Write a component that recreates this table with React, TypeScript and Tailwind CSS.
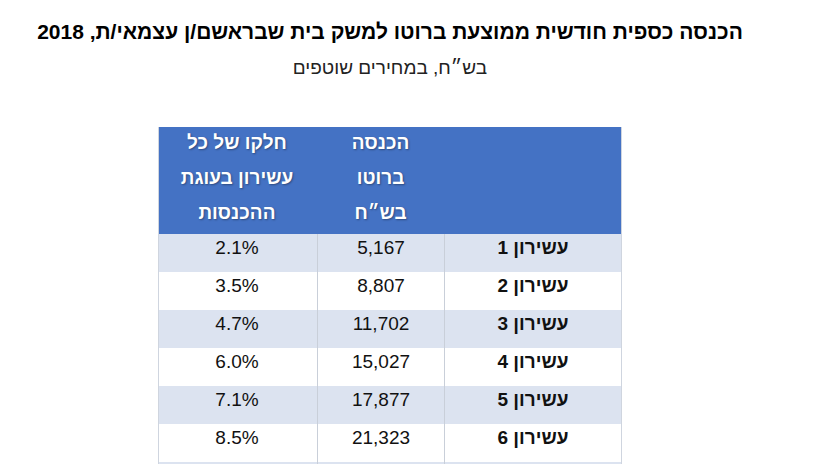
import React from "react"

const rows = [
  { decile: "עשירון 1", income: "5,167", share: "2.1%" },
  { decile: "עשירון 2", income: "8,807", share: "3.5%" },
  { decile: "עשירון 3", income: "11,702", share: "4.7%" },
  { decile: "עשירון 4", income: "15,027", share: "6.0%" },
  { decile: "עשירון 5", income: "17,877", share: "7.1%" },
  { decile: "עשירון 6", income: "21,323", share: "8.5%" },
  { decile: "עשירון 7", income: "25,321", share: "10.1%" },
]

export default function App() {
  return (
    <div className="w-[827px] h-[464px] overflow-hidden bg-white">
      <div dir="rtl" className="w-[780px] flex flex-col items-center pt-[18px]" style={{ fontFamily: '"Liberation Sans", "DejaVu Sans", sans-serif' }}>
        <h1 className="text-[21px] leading-[28px] font-bold text-black">
          הכנסה כספית חודשית ממוצעת ברוטו למשק בית שבראשם/ן עצמאי/ת, 2018
        </h1>
        <p className="mt-[10px] text-[19px] leading-[24px] text-[#222]">בש״ח, במחירים שוטפים</p>

        <div className="mt-[47px] w-[464px] border-x border-[#cfd5df]">
          <div className="grid grid-cols-[177px_127px_160px] bg-[#4472c4] h-[107px] text-white font-bold text-[19px] leading-[35px] [text-shadow:1px_1px_2px_rgba(0,0,0,0.35)]">
            <div></div>
            <div className="text-center -mt-[2px]">
              <div>הכנסה</div>
              <div>ברוטו</div>
              <div>בש״ח</div>
            </div>
            <div className="text-center -mt-[2px]">
              <div>חלקו של כל</div>
              <div>עשירון בעוגת</div>
              <div>ההכנסות</div>
            </div>
          </div>
          {rows.map((r, i) => (
            <div
              key={r.decile}
              className={`grid grid-cols-[177px_127px_160px] h-[38px] text-[19px] leading-[28px] text-[#111] ${i % 2 === 0 ? "bg-[#dce3f0]" : "bg-white"}`}
            >
              <div className="text-center font-bold border-l border-[#c9cfd9]">{r.decile}</div>
              <div className="text-center border-l border-[#c9cfd9]">{r.income}</div>
              <div className="text-center">{r.share}</div>
            </div>
          ))}
        </div>
      </div>
    </div>
  )
}
